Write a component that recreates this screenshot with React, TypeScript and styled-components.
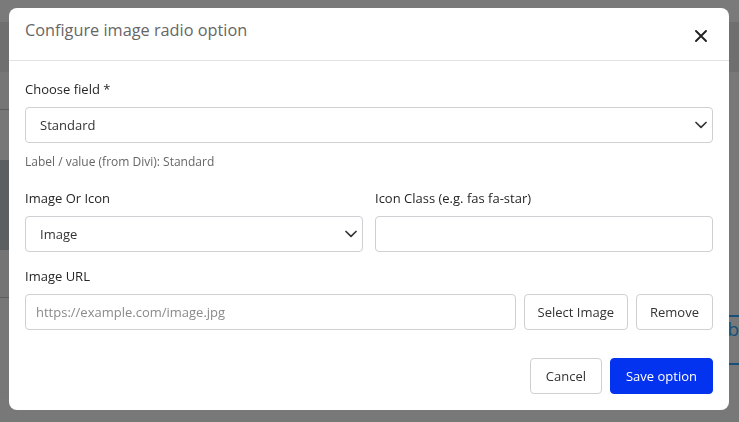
import React from "react";
import styled, { createGlobalStyle } from "styled-components";

const GlobalStyle = createGlobalStyle`
  html, body { margin: 0; padding: 0; }
  body {
    font-family: "Open Sans", "Noto Sans", "Liberation Sans", sans-serif;
    overflow: hidden;
  }
  * { box-sizing: border-box; }
`;

/* ---------- underlying (dimmed) page ---------- */
const Page = styled.div`
  height: 100vh;
  display: flex;
  flex-direction: column;
  background: #eeeeee;
`;

const TopBar = styled.div`
  height: 22px;
  background: #f5f5f5;
  flex-shrink: 0;
`;

const Toolbar = styled.div`
  height: 50px;
  background: #dfdfdf;
  flex-shrink: 0;
`;

const PageContent = styled.div`
  flex: 1;
  display: grid;
  grid-template-columns: 360px 1fr;
  background: #f0f0f0;
`;

const SideColumn = styled.div`
  display: flex;
  flex-direction: column;
`;

const SideBlock = styled.div<{ $h: number; $bg: string; $line?: boolean }>`
  height: ${(p) => p.$h}px;
  background: ${(p) => p.$bg};
  border-bottom: ${(p) => (p.$line ? "1px solid #bcbcbc" : "none")};
  flex-shrink: 0;
`;

const MainColumn = styled.div`
  display: flex;
  justify-content: flex-end;
  align-items: flex-start;
  padding-top: 243px;
  overflow: hidden;
`;

const DiviButton = styled.div`
  height: 50px;
  margin-right: -30px;
  padding: 0 30px 0 40px;
  display: flex;
  align-items: flex-start;
  border-top: 2px solid #2ea3f2;
  border-bottom: 2px solid #2ea3f2;
  color: #2ea3f2;
  font-size: 19px;
  line-height: 24px;
  font-weight: 500;
`;

/* ---------- modal ---------- */
const Overlay = styled.div`
  position: fixed;
  inset: 0;
  background: rgba(0, 0, 0, 0.5);
  display: flex;
  align-items: flex-start;
  padding: 8px 0 0 9px;
`;

const Modal = styled.div`
  width: 720px;
  background: #ffffff;
  border-radius: 8px;
  display: flex;
  flex-direction: column;
`;

const Header = styled.div`
  height: 53px;
  padding: 0 16px;
  display: flex;
  align-items: center;
  justify-content: space-between;
  border-bottom: 1px solid #e3e3e3;
`;

const Title = styled.h2`
  margin: 0 0 8px 0;
  font-size: 16.3px;
  line-height: 24px;
  font-weight: 400;
  color: #666666;
`;

const CloseButton = styled.button`
  width: 24px;
  height: 24px;
  margin-top: 3px;
  padding: 0;
  border: none;
  background: transparent;
  display: flex;
  align-items: center;
  justify-content: center;
  cursor: pointer;
`;

const Body = styled.div`
  padding: 19px 16px 16px;
  display: flex;
  flex-direction: column;
`;

const Field = styled.div<{ $mt?: number }>`
  display: flex;
  flex-direction: column;
  margin-top: ${(p) => p.$mt ?? 0}px;
  min-width: 0;
`;

const Label = styled.label`
  font-size: 13px;
  line-height: 18px;
  font-weight: 400;
  color: #262626;
  margin-bottom: 9px;
`;

const Help = styled.div`
  margin-top: 10px;
  font-size: 12px;
  line-height: 18px;
  color: #666666;
`;

const TwoCols = styled.div`
  display: grid;
  grid-template-columns: 1fr 1fr;
  column-gap: 12px;
  margin-top: 18px;
`;

const SelectWrap = styled.div`
  position: relative;
`;

const Select = styled.select`
  width: 100%;
  height: 36px;
  padding: 0 30px 0 14px;
  border: 1px solid #cfcfd4;
  border-radius: 4px;
  background: #ffffff;
  font-family: inherit;
  font-size: 13px;
  color: #333333;
  appearance: none;
  -webkit-appearance: none;
  outline: none;
`;

const Chevron = styled.svg`
  position: absolute;
  right: 6px;
  top: 50%;
  transform: translateY(-50%);
  pointer-events: none;
`;

const Input = styled.input`
  width: 100%;
  height: 36px;
  padding: 0 10px;
  border: 1px solid #cfcfd4;
  border-radius: 4px;
  background: #ffffff;
  font-family: inherit;
  font-size: 13px;
  color: #333333;
  outline: none;
  &::placeholder { color: #8a8a8a; }
`;

const UrlRow = styled.div`
  display: flex;
  gap: 8px;
`;

const Button = styled.button<{ $primary?: boolean; $pad?: number }>`
  height: 36px;
  padding: 0 ${(p) => p.$pad ?? 13}px;
  border-radius: 4px;
  border: 1px solid ${(p) => (p.$primary ? "#0433f0" : "#cfcfd4")};
  background: ${(p) => (p.$primary ? "#0433f0" : "#ffffff")};
  color: ${(p) => (p.$primary ? "#ffffff" : "#333333")};
  font-family: inherit;
  font-size: 13px;
  font-weight: ${(p) => (p.$primary ? 500 : 400)};
  white-space: nowrap;
  flex-shrink: 0;
  cursor: pointer;
`;

const Footer = styled.div`
  margin-top: 28px;
  display: flex;
  justify-content: flex-end;
  gap: 8px;
`;

const ChevronIcon = () => (
  <Chevron width="12" height="8" viewBox="0 0 12 8" fill="none">
    <path d="M1 1.5 L6 6.3 L11 1.5" stroke="#333" strokeWidth="1.7" strokeLinecap="round" strokeLinejoin="round" />
  </Chevron>
);

export default function App() {
  return (
    <>
      <GlobalStyle />
      <Page>
        <TopBar />
        <Toolbar />
        <PageContent>
          <SideColumn>
            <SideBlock $h={38} $bg="#ececec" $line />
            <SideBlock $h={50} $bg="#eeeeee" />
            <SideBlock $h={90} $bg="#b6bfc5" />
            <SideBlock $h={48} $bg="#e8e8e8" $line />
            <SideBlock $h={100} $bg="#eeeeee" />
          </SideColumn>
          <MainColumn>
            <DiviButton>b</DiviButton>
          </MainColumn>
        </PageContent>
      </Page>
      <Overlay>
        <Modal>
          <Header>
            <Title>Configure image radio option</Title>
            <CloseButton aria-label="Close">
              <svg width="12" height="12" viewBox="0 0 12 12" fill="none">
                <path d="M1 1 L11 11 M11 1 L1 11" stroke="#222" strokeWidth="1.9" strokeLinecap="round" />
              </svg>
            </CloseButton>
          </Header>
          <Body>
            <Field>
              <Label>Choose field *</Label>
              <SelectWrap>
                <Select defaultValue="standard">
                  <option value="standard">Standard</option>
                </Select>
                <ChevronIcon />
              </SelectWrap>
              <Help>Label / value (from Divi): Standard</Help>
            </Field>
            <TwoCols>
              <Field>
                <Label>Image Or Icon</Label>
                <SelectWrap>
                  <Select defaultValue="image">
                    <option value="image">Image</option>
                    <option value="icon">Icon</option>
                  </Select>
                  <ChevronIcon />
                </SelectWrap>
              </Field>
              <Field>
                <Label>Icon Class (e.g. fas fa-star)</Label>
                <Input type="text" />
              </Field>
            </TwoCols>
            <Field $mt={15}>
              <Label>Image URL</Label>
              <UrlRow>
                <Input type="text" placeholder="https://example.com/image.jpg" />
                <Button>Select Image</Button>
                <Button>Remove</Button>
              </UrlRow>
            </Field>
            <Footer>
              <Button $pad={15}>Cancel</Button>
              <Button $primary $pad={15}>Save option</Button>
            </Footer>
          </Body>
        </Modal>
      </Overlay>
    </>
  );
}
